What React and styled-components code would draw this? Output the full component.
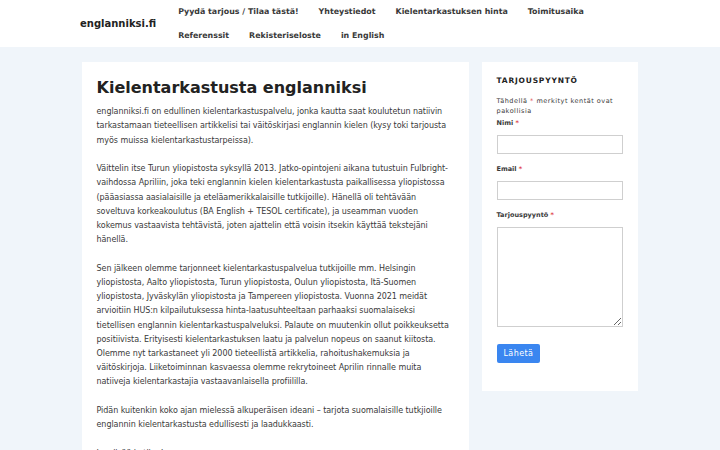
import React from 'react';
import styled, { createGlobalStyle } from 'styled-components';

const GlobalStyle = createGlobalStyle`
  html, body {
    margin: 0;
    padding: 0;
    overflow: hidden;
  }
  body {
    background: #f0f5fa;
    font-family: "DejaVu Sans", "Noto Sans", sans-serif;
    color: #3a3a3a;
  }
  * {
    box-sizing: border-box;
  }
`;

const Header = styled.header`
  background: #fff;
`;

const HeaderInner = styled.div`
  width: 560px;
  margin: 0 auto;
  display: flex;
  align-items: center;
  gap: 2px;
`;

const Logo = styled.a`
  font-size: 10px;
  font-weight: bold;
  color: #222;
  text-decoration: none;
  white-space: nowrap;
  margin-right: 10px;
`;

const Nav = styled.nav`
  display: flex;
  flex-wrap: wrap;
  flex: 1;
`;

const NavItem = styled.a`
  font-size: 7.9px;
  font-weight: bold;
  color: #3a3a3a;
  text-decoration: none;
  line-height: 23.5px;
  padding: 0 10px;
  white-space: nowrap;
`;

const Container = styled.div`
  width: 557px;
  margin: 15px auto 0;
  display: grid;
  grid-template-columns: 387px 156px;
  gap: 13px;
  align-items: start;
`;

const Article = styled.article`
  background: #fff;
  padding: 16px 15px 20px;
`;

const Title = styled.h1`
  font-size: 16px;
  font-weight: bold;
  line-height: 1.2;
  color: #222;
  margin: 0 0 8px;
`;

const Para = styled.p`
  font-size: 8px;
  letter-spacing: -0.05px;
  line-height: 14.2px;
  margin: 0 0 14.4px;
`;

const Line = styled.span`
  display: block;
  white-space: nowrap;
`;

const Sidebar = styled.aside`
  background: #fff;
  padding: 14px 15px 28px;
`;

const WidgetTitle = styled.h2`
  font-size: 7.5px;
  font-weight: bold;
  letter-spacing: 0.8px;
  color: #222;
  margin: 0 0 11px;
`;

const Note = styled.p`
  font-size: 6.5px;
  letter-spacing: 0.5px;
  line-height: 10px;
  margin: 0 0 2px;
`;

const Req = styled.span`
  color: #e0474c;
`;

const Field = styled.div`
  margin-bottom: 10px;
`;

const Label = styled.label`
  display: block;
  font-size: 6.5px;
  font-weight: bold;
  line-height: 10px;
  color: #3a3a3a;
  margin-bottom: 7px;
`;

const Input = styled.input`
  display: block;
  width: 100%;
  height: 19px;
  border: 1px solid #cfcfcf;
  background: #fff;
  padding: 2px 4px;
  font: inherit;
  font-size: 7px;
`;

const TextArea = styled.textarea`
  display: block;
  width: 100%;
  height: 100px;
  border: 1px solid #cfcfcf;
  background: #fff;
  font: inherit;
  font-size: 7px;
  resize: vertical;
`;

const Button = styled.button`
  margin-top: 7px;
  background: #3a86f0;
  color: #fff;
  border: none;
  border-radius: 2px;
  font-family: inherit;
  font-size: 8px;
  letter-spacing: 0.4px;
  padding: 0 7px;
  height: 19px;
  cursor: pointer;
`;

const navLinks = [
  'Pyydä tarjous / Tilaa tästä!',
  'Yhteystiedot',
  'Kielentarkastuksen hinta',
  'Toimitusaika',
  'Referenssit',
  'Rekisteriseloste',
  'in English',
];

const paragraphs = [
  [
    'englanniksi.fi on edullinen kielentarkastuspalvelu, jonka kautta saat koulutetun natiivin',
    'tarkastamaan tieteellisen artikkelisi tai väitöskirjasi englannin kielen (kysy toki tarjousta',
    'myös muissa kielentarkastustarpeissa).',
  ],
  [
    'Väittelin itse Turun yliopistosta syksyllä 2013. Jatko-opintojeni aikana tutustuin Fulbright-',
    'vaihdossa Apriliin, joka teki englannin kielen kielentarkastusta paikallisessa yliopistossa',
    '(pääasiassa aasialaisille ja eteläamerikkalaisille tutkijoille). Hänellä oli tehtävään',
    'soveltuva korkeakoulutus (BA English + TESOL certificate), ja useamman vuoden',
    'kokemus vastaavista tehtävistä, joten ajattelin että voisin itsekin käyttää tekstejäni',
    'hänellä.',
  ],
  [
    'Sen jälkeen olemme tarjonneet kielentarkastuspalvelua tutkijoille mm. Helsingin',
    'yliopistosta, Aalto yliopistosta, Turun yliopistosta, Oulun yliopistosta, Itä-Suomen',
    'yliopistosta, Jyväskylän yliopistosta ja Tampereen yliopistosta. Vuonna 2021 meidät',
    'arvioitiin HUS:n kilpailutuksessa hinta-laatusuhteeltaan parhaaksi suomalaiseksi',
    'tietellisen englannin kielentarkastuspalveluksi. Palaute on muutenkin ollut poikkeuksetta',
    'positiivista. Erityisesti kielentarkastuksen laatu ja palvelun nopeus on saanut kiitosta.',
    'Olemme nyt tarkastaneet yli 2000 tieteellistä artikkelia, rahoitushakemuksia ja',
    'väitöskirjoja. Liiketoiminnan kasvaessa olemme rekrytoineet Aprilin rinnalle muita',
    'natiiveja kielentarkastajia vastaavanlaisella profiililla.',
  ],
  [
    'Pidän kuitenkin koko ajan mielessä alkuperäisen ideani – tarjota suomalaisille tutkjioille',
    'englannin kielentarkastusta edullisesti ja laadukkaasti.',
  ],
  ['Lue lisää ja tilaa!'],
];

const App = () => {
  return (
    <>
      <GlobalStyle />
      <Header>
        <HeaderInner>
          <Logo href="#">englanniksi.fi</Logo>
          <Nav>
            {navLinks.map((item) => (
              <NavItem key={item} href="#">{item}</NavItem>
            ))}
          </Nav>
        </HeaderInner>
      </Header>
      <Container>
        <Article>
          <Title>Kielentarkastusta englanniksi</Title>
          {paragraphs.map((lines, i) => (
            <Para key={i}>
              {lines.map((line) => (
                <Line key={line}>{line}</Line>
              ))}
            </Para>
          ))}
        </Article>
        <Sidebar>
          <WidgetTitle>TARJOUSPYYNTÖ</WidgetTitle>
          <form onSubmit={(e) => e.preventDefault()}>
            <Note>
              Tähdellä <Req>*</Req> merkityt kentät ovat pakollisia
            </Note>
            <Field>
              <Label>Nimi <Req>*</Req></Label>
              <Input type="text" />
            </Field>
            <Field>
              <Label>Email <Req>*</Req></Label>
              <Input type="email" />
            </Field>
            <Field>
              <Label>Tarjouspyyntö <Req>*</Req></Label>
              <TextArea />
            </Field>
            <Button type="submit">Lähetä</Button>
          </form>
        </Sidebar>
      </Container>
    </>
  );
};

export default App;
